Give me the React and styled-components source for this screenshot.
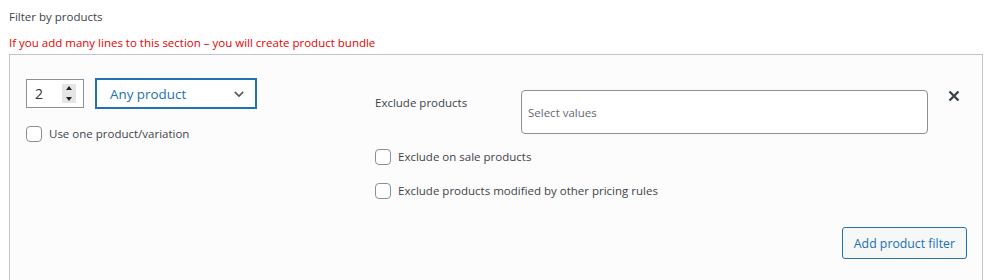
import React from "react";
import styled, { createGlobalStyle } from "styled-components";

const GlobalStyle = createGlobalStyle`
  body {
    margin: 0;
    background: #fff;
    font-family: "Open Sans", "Noto Sans", sans-serif;
    font-size: 11.5px;
    color: #3c434a;
  }
`;

const Page = styled.div`
  padding: 8px 6px 0 9px;
`;

const Title = styled.div`
  line-height: 18px;
  margin-bottom: 8px;
`;

const Notice = styled.div`
  color: #e60000;
  line-height: 18px;
  margin-bottom: 2px;
`;

const Panel = styled.div`
  border: 1px solid #c3c4c7;
  border-bottom: none;
  background: #fcfcfc;
  padding: 23px 15px 30px 16px;
  height: 230px;
  box-sizing: border-box;
`;

const Row = styled.div`
  display: grid;
  grid-template-columns: 349px 1fr 30px;
`;

const Column = styled.div`
  display: flex;
  flex-direction: column;
`;

const InputLine = styled.div`
  display: flex;
  align-items: center;
  gap: 11px;
`;

const NumberBox = styled.div`
  width: 58px;
  height: 29px;
  box-sizing: border-box;
  border: 1px solid #8c8f94;
  background: #fff;
  display: flex;
  align-items: center;
  justify-content: space-between;
  padding: 0 7px 0 8px;
  font-size: 14px;
  color: #2c3338;
`;

const Spinner = styled.div`
  width: 14px;
  height: 19px;
  background: #e5e5e5;
  display: flex;
  flex-direction: column;
  justify-content: space-between;
  align-items: center;
  padding: 2px 0;
  box-sizing: border-box;
`;

const Arrow = styled.span`
  width: 0;
  height: 0;
  border-left: 3px solid transparent;
  border-right: 3px solid transparent;
  ${(p) =>
    p.$up ? "border-bottom: 4px solid #222;" : "border-top: 4px solid #222;"}
`;

const Select = styled.div`
  width: 162px;
  height: 31px;
  box-sizing: border-box;
  border: 2px solid #2271b1;
  background: #fff;
  display: flex;
  align-items: center;
  justify-content: space-between;
  padding: 0 9px 0 13px;
  font-size: 13.4px;
  color: #2271b1;
`;

const CheckLine = styled.label`
  display: flex;
  align-items: center;
  gap: 7px;
  margin-top: ${(p) => p.$top}px;
  line-height: 16px;
`;

const Box = styled.span`
  width: 16px;
  height: 16px;
  box-sizing: border-box;
  border: 1px solid #8c8f94;
  border-radius: 4px;
  background: #fff;
  flex-shrink: 0;
`;

const FieldLine = styled.div`
  display: flex;
  align-items: flex-start;
  margin-top: 12px;
`;

const FieldLabel = styled.div`
  width: 146px;
  padding-top: 4px;
  line-height: 18px;
`;

const ValuesBox = styled.div`
  width: 407px;
  height: 44px;
  box-sizing: border-box;
  border: 1px solid #8c8f94;
  border-radius: 4px;
  background: #fff;
  display: flex;
  align-items: center;
  padding: 0 6px;
  color: #646970;
`;

const Close = styled.button`
  border: none;
  background: none;
  padding: 0;
  margin-top: 12px;
  width: 14px;
  height: 14px;
  cursor: pointer;
  justify-self: end;
  margin-right: 6px;
`;

const Footer = styled.div`
  display: flex;
  justify-content: flex-end;
  margin-top: 28px;
`;

const Button = styled.button`
  font-family: inherit;
  font-size: 12.3px;
  height: 32px;
  padding: 0 11px;
  border: 1px solid #2271b1;
  border-radius: 3px;
  background: #f6f7f7;
  color: #2271b1;
  cursor: pointer;
`;

export default function App() {
  return (
    <>
      <GlobalStyle />
      <Page>
        <Title>Filter by products</Title>
        <Notice>
          If you add many lines to this section – you will create product bundle
        </Notice>
        <Panel>
          <Row>
            <Column>
              <InputLine>
                <NumberBox>
                  2
                  <Spinner>
                    <Arrow $up />
                    <Arrow />
                  </Spinner>
                </NumberBox>
                <Select>
                  Any product
                  <svg width="14" height="14" viewBox="0 0 20 20">
                    <path
                      d="M4 7l6 6 6-6"
                      fill="none"
                      stroke="#50575e"
                      strokeWidth="2.2"
                    />
                  </svg>
                </Select>
              </InputLine>
              <CheckLine $top={17}>
                <Box />
                Use one product/variation
              </CheckLine>
            </Column>
            <Column>
              <FieldLine>
                <FieldLabel>Exclude products</FieldLabel>
                <ValuesBox>Select values</ValuesBox>
              </FieldLine>
              <CheckLine $top={15}>
                <Box />
                Exclude on sale products
              </CheckLine>
              <CheckLine $top={18}>
                <Box />
                Exclude products modified by other pricing rules
              </CheckLine>
            </Column>
            <Close aria-label="Remove">
              <svg width="12" height="12" viewBox="0 0 12 12">
                <path
                  d="M1.5 1.5l9 9M10.5 1.5l-9 9"
                  stroke="#3c434a"
                  strokeWidth="2.4"
                />
              </svg>
            </Close>
          </Row>
          <Footer>
            <Button>Add product filter</Button>
          </Footer>
        </Panel>
      </Page>
    </>
  );
}
